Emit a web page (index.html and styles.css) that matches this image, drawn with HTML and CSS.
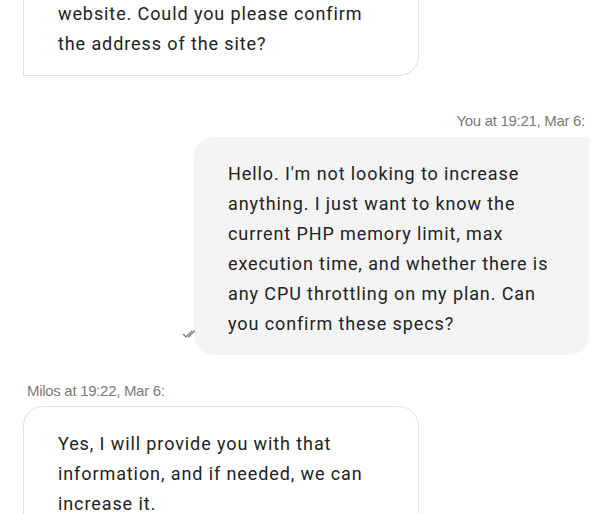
FILE: index.html
```html
<!DOCTYPE html>
<html>
<head>
<meta charset="utf-8">
<link rel="stylesheet" href="styles.css">
</head>
<body>
<div class="chat">
  <div class="msg agent first">
    <div class="bubble agent-bubble tail-bl">website. Could you please confirm the address of the site?</div>
  </div>
  <div class="msg user">
    <div class="meta meta-right">You at 19:21, Mar 6:</div>
    <div class="bubble user-bubble">
      <svg class="ticks" width="16" height="10" viewBox="0 0 16 10"><path d="M1.5 5.5 L4 8 L10 2 M6.5 8 L12.5 2" fill="none" stroke="#777" stroke-width="1.2" stroke-linecap="round"/></svg>
      Hello. I'm not looking to increase anything. I just want to know the current PHP memory limit, max execution time, and whether there is any CPU throttling on my plan. Can you confirm these specs?
    </div>
  </div>
  <div class="msg agent">
    <div class="meta meta-left">Milos at 19:22, Mar 6:</div>
    <div class="bubble agent-bubble">Yes, I will provide you with that information, and if needed, we can increase it.</div>
  </div>
</div>
</body>
</html>
```
FILE: styles.css
```css
html, body {
  margin: 0;
  padding: 0;
  background: #ffffff;
  overflow: hidden;
}
.chat {
  display: flex;
  flex-direction: column;
  margin-top: -24px;
  padding: 0 22px 0 23px;
}
.msg {
  display: flex;
  flex-direction: column;
}
.msg.user {
  align-items: flex-end;
  margin-top: 37px;
}
.msg.agent {
  align-items: flex-start;
  margin-top: 28px;
}
.msg.agent.first {
  margin-top: 0;
}
.meta {
  font-family: "Liberation Sans", Arial, sans-serif;
  font-size: 15px;
  line-height: 16px;
  color: #7a7a7a;
  letter-spacing: -0.3px;
}
.meta-right {
  padding-right: 4px;
  margin-bottom: 8px;
}
.meta-left {
  padding-left: 4px;
  margin-bottom: 7px;
}
.bubble {
  position: relative;
  box-sizing: border-box;
  width: 396px;
  font-family: Roboto, "Noto Sans", sans-serif;
  font-size: 18px;
  letter-spacing: 0.9px;
  line-height: 30px;
  color: #222222;
  border-radius: 20px;
  padding: 22px 34px 16px 34px;
}
.agent-bubble {
  border: 1px solid #dde1e6;
  background: #ffffff;
}
.tail-bl {
  border-bottom-left-radius: 0;
}
.user-bubble {
  background: #f4f4f4;
  border-top-right-radius: 0;
  width: 395px;
}
.ticks {
  position: absolute;
  left: -12px;
  bottom: 16px;
}
```
